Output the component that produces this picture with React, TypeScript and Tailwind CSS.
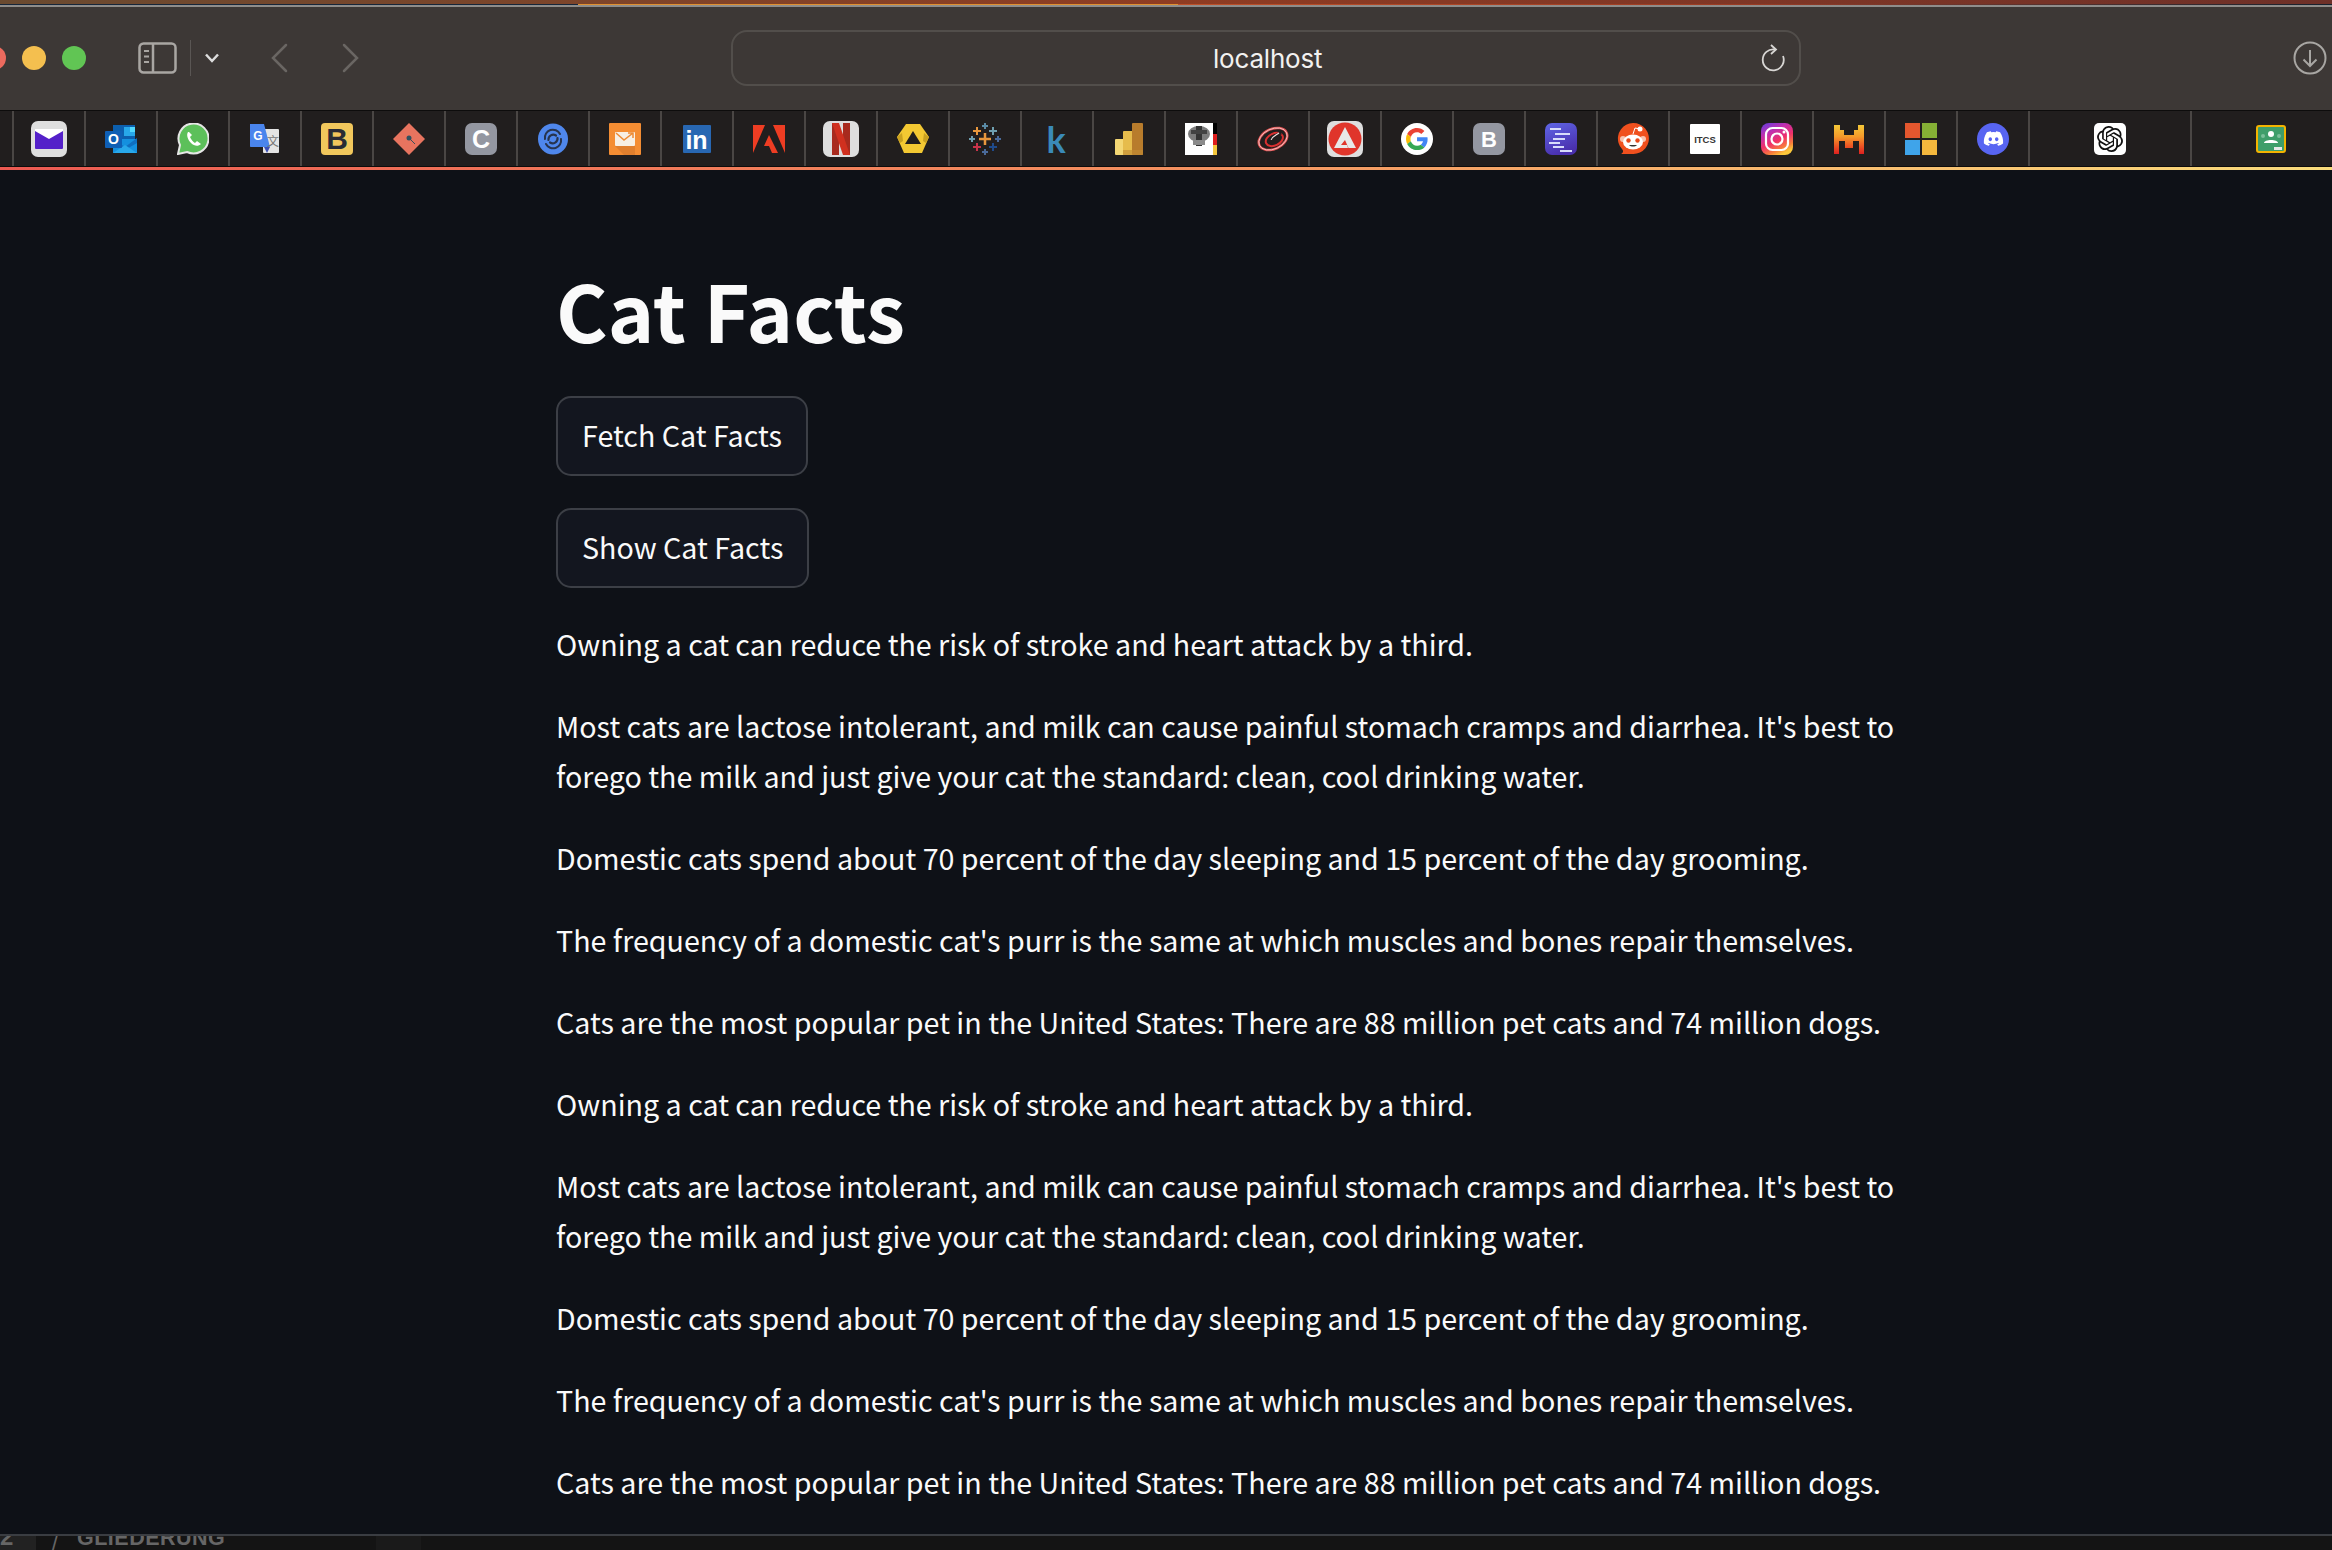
import React from "react";
import { FaDiscord } from "react-icons/fa6";
import { SiOpenai } from "react-icons/si";

const Svg = ({ s = 32, children }: { s?: number; children: React.ReactNode }) => (
  <svg width={s} height={s} viewBox={`0 0 ${s} ${s}`} className="block shrink-0">
    {children}
  </svg>
);

const font = "Liberation Sans, sans-serif";

const Letter = ({ x, y, size, fill, children, weight = 700 }: { x: number; y: number; size: number; fill: string; children: React.ReactNode; weight?: number }) => (
  <text x={x} y={y} fontSize={size} fontWeight={weight} fontFamily={font} fill={fill} textAnchor="middle">
    {children}
  </text>
);

const Plus = ({ x, y, r, c, w = 2 }: { x: number; y: number; r: number; c: string; w?: number }) => (
  <path d={`M${x - r} ${y}H${x + r}M${x} ${y - r}V${y + r}`} stroke={c} strokeWidth={w} />
);

const icons: React.ReactNode[] = [
  <Svg s={36} key="mail">
    <rect width="36" height="36" rx="7" fill="#dedede" />
    <rect x="4" y="8" width="28" height="20" rx="1" fill="#5420c9" />
    <path d="M4 8H32V10L18 18L4 10Z" fill="#fff" />
  </Svg>,
  <Svg key="outlook">
    <rect x="8" y="2" width="22" height="15" fill="#0c5fae" />
    <rect x="19" y="4" width="11" height="9" fill="#28a8ea" />
    <rect x="25" y="4" width="5" height="5" fill="#50d9ff" />
    <rect x="8" y="16" width="24" height="14" fill="#1490df" />
    <path d="M8 16L20 24L32 15V20L20 27L8 20Z" fill="#0f6fc0" />
    <path d="M8 30L20 22L32 30Z" fill="#28a8ea" />
    <rect x="0" y="8" width="17" height="17" rx="1" fill="#0f5fb5" />
    <Letter x={8.5} y={21} size={14} fill="#fff">O</Letter>
  </Svg>,
  <Svg key="whatsapp">
    <path d="M1 31L3 22A15 15 0 1 1 10 29Z" fill="#5cc05a" stroke="#e6e6e6" strokeWidth="2" />
    <path d="M11 9C9 12 11 17 14 20S21 24 24 21L20 18L18 20C16 19 14 16 13 14L15 12L12 9Z" fill="#fff" />
  </Svg>,
  <Svg key="translate">
    <rect x="14" y="6" width="16" height="24" rx="1" fill="#e4e4e4" />
    <path d="M15 24L18 30L21 24Z" fill="#3c50b8" />
    <path d="M1 1H15L21 24H2C1.400 24 1 23.600 1 23Z" fill="#4a85ed" />
    <Letter x={9} y={17} size={12} fill="#fff">G</Letter>
    <text x="18" y="23" fontSize="12" fontFamily="Noto Sans CJK SC, sans-serif" fill="#777">文</text>
  </Svg>,
  <Svg key="yellowb">
    <rect width="32" height="32" rx="4" fill="#f1c75c" />
    <Letter x={16} y={26} size={30} fill="#282b34" weight={700}>B</Letter>
    <rect x="13" y="18" width="6" height="3" fill="#f1c75c" />
  </Svg>,
  <Svg key="diamond">
    <path d="M16 0L32 16L16 32L0 16Z" fill="#e8745f" />
    <path d="M16 15L22 21" stroke="#38505c" strokeWidth="1" />
    <circle cx="16" cy="15" r="2.500" fill="#30505f" />
  </Svg>,
  <Svg key="c">
    <rect width="32" height="32" rx="7" fill="#9497a1" />
    <Letter x={16} y={25} size={25} fill="#fff">C</Letter>
  </Svg>,
  <Svg key="deepl">
    <ellipse cx="16" cy="16" rx="15" ry="15.500" fill="#4f87ec" />
    <g fill="none" stroke="#27344e" strokeLinecap="round">
      <path d="M8 16A8 8 0 0 1 23 11" strokeWidth="2" />
      <path d="M24 16A8 8 0 0 1 9 21" strokeWidth="2" />
      <path d="M11.500 17A4.800 4.800 0 0 1 19 12.500" strokeWidth="2.200" />
      <path d="M20.500 15A4.800 4.800 0 0 1 13 19.500" strokeWidth="2.200" />
    </g>
  </Svg>,
  <Svg key="orange">
    <rect width="32" height="32" rx="1" fill="#f48d33" />
    <path d="M6 23L26 9V32H15Z" fill="#e07f2e" />
    <rect x="6" y="9" width="20" height="14" rx="1" fill="#f7efe4" />
    <path d="M7 10L15 17L24 10M19 10H24V15" stroke="#ee8b34" strokeWidth="1.500" fill="none" />
  </Svg>,
  <Svg key="linkedin">
    <rect x="2" y="2" width="28" height="28" rx="1" fill="#2867b2" />
    <Letter x={15.500} y={26} size={25} fill="#fff">in</Letter>
  </Svg>,
  <Svg key="adobe">
    <path d="M0 2H12L0 30ZM20 2H32V30ZM16 12L25 30H19L16 23H11Z" fill="#ee3d23" />
  </Svg>,
  <Svg s={36} key="netflix">
    <rect width="36" height="36" rx="7" fill="#dedede" />
    <rect x="9" y="2" width="7" height="32" fill="#a82a1e" />
    <rect x="20" y="2" width="7" height="32" fill="#a82a1e" />
    <path d="M9 2H16L27 34H20Z" fill="#d0301f" />
  </Svg>,
  <Svg key="commerz">
    <path d="M9 1H23L32 14L25 30H7L0 14Z" fill="#f3c832" />
    <path d="M16 8L24 21H8Z" fill="#211e1e" />
    <path d="M0 14L5 10L6 18L3 20ZM32 14L27 10L26 18L29 20Z" fill="#c9a020" />
  </Svg>,
  <Svg key="tableau">
    <Plus x={16} y={16} r={6} c="#e8973d" w={2.500} />
    <Plus x={8} y={8} r={4} c="#e8973d" />
    <Plus x={16} y={3} r={3} c="#5a8aa5" />
    <Plus x={24} y={8} r={4} c="#6f9fb0" />
    <Plus x={3} y={16} r={3} c="#6f9fb0" />
    <Plus x={29} y={16} r={3} c="#4a6a9a" />
    <Plus x={8} y={24} r={4} c="#c8334a" />
    <Plus x={24} y={24} r={4} c="#1f4a8a" />
    <Plus x={16} y={29} r={3} c="#4a6a9a" />
  </Svg>,
  <Svg key="k">
    <text x="15" y="30" fontSize="36" fontWeight="700" fontFamily="Lato, sans-serif" fill="#3a8ab8" textAnchor="middle">k</text>
  </Svg>,
  <Svg key="powerbi">
    <rect x="2" y="16" width="12" height="16" rx="1" fill="#f4d774" />
    <rect x="10" y="8" width="11" height="24" rx="1" fill="#e6bc4c" />
    <rect x="19" y="0" width="11" height="32" rx="1" fill="#b87c2c" />
    <rect x="10" y="27" width="20" height="5" fill="#c08a34" opacity="0.6" />
  </Svg>,
  <Svg key="bund">
    <rect width="32" height="32" fill="#fff" />
    <rect x="28" width="4" height="11" fill="#000" />
    <rect x="28" y="11" width="4" height="11" fill="#dd1d1d" />
    <rect x="28" y="22" width="4" height="10" fill="#f5c63c" />
    <g opacity="0.85" style={{ filter: "blur(0.7px)" }}>
      <ellipse cx="14" cy="11" rx="11" ry="8" fill="#666" />
      <rect x="11" y="3" width="6" height="20" fill="#111" />
      <rect x="6" y="7" width="16" height="4" fill="#222" />
      <rect x="8" y="17" width="12" height="5" fill="#777" />
    </g>
  </Svg>,
  <Svg key="at">
    <g transform="rotate(-25 16 16)" fill="none">
      <ellipse cx="16" cy="16" rx="15" ry="10" stroke="#e05050" strokeWidth="2.500" />
      <ellipse cx="16" cy="16" rx="15" ry="10" stroke="#f0d0d0" strokeWidth="0.800" />
      <ellipse cx="17" cy="17" rx="9" ry="6" stroke="#d83030" strokeWidth="2" />
      <path d="M17 14H26" stroke="#211e1e" strokeWidth="3" />
      <path d="M14 16C17 13 21 14 24 13" stroke="#f0e0e0" strokeWidth="1.200" />
    </g>
  </Svg>,
  <Svg s={36} key="arbeit">
    <rect width="36" height="36" rx="7" fill="#dedede" />
    <circle cx="18" cy="18" r="16.500" fill="#e0352b" />
    <path d="M18 6L29 27L21.500 27L18 19L14 24H20L21 27H7Z" fill="#e8e8e8" />
  </Svg>,
  <Svg key="google">
    <circle cx="16" cy="16" r="16" fill="#fff" />
    <g transform="translate(5 5) scale(0.46)">
      <path fill="#EA4335" d="M24 9.500c3.540 0 6.710 1.220 9.210 3.600l6.850-6.850C35.900 2.380 30.470 0 24 0 14.620 0 6.510 5.380 2.560 13.220l7.980 6.190C12.430 13.720 17.740 9.500 24 9.500z" />
      <path fill="#4285F4" d="M46.980 24.550c0-1.570-.15-3.090-.38-4.550H24v9.020h12.940c-.58 2.960-2.260 5.480-4.780 7.180l7.730 6c4.510-4.180 7.090-10.360 7.090-17.650z" />
      <path fill="#FBBC05" d="M10.530 28.590c-.5-1.450-.78-2.990-.78-4.590s.27-3.140.78-4.590l-7.980-6.190C.92 16.460 0 20.120 0 24c0 3.880.92 7.540 2.560 10.780l7.970-6.190z" />
      <path fill="#34A853" d="M24 48c6.480 0 11.930-2.130 15.890-5.810l-7.730-6c-2.150 1.450-4.920 2.300-8.160 2.300-6.260 0-11.570-4.220-13.470-9.910l-7.980 6.190C6.510 42.620 14.620 48 24 48z" />
    </g>
  </Svg>,
  <Svg key="grayb">
    <rect width="32" height="32" rx="7" fill="#9497a1" />
    <Letter x={16} y={24} size={22} fill="#fff">B</Letter>
  </Svg>,
  <Svg key="lines">
    <defs>
      <linearGradient id="pl" x1="0" y1="0" x2="0.400" y2="1">
        <stop offset="0" stopColor="#5f66e6" />
        <stop offset="1" stopColor="#4a30ae" />
      </linearGradient>
    </defs>
    <rect width="32" height="32" rx="7" fill="url(#pl)" />
    <path d="M5 6H16M10 11H25M8 16H20M4 20H15M8 24H19M15 28H27" stroke="#d8dcfb" strokeWidth="2.200" />
  </Svg>,
  <Svg key="reddit">
    <path d="M4 31C6 30 7 28 5 26A15.500 15.500 0 1 1 16 31Z" fill="#f0501e" />
    <circle cx="6" cy="16" r="3" fill="#f7c3b0" />
    <circle cx="26" cy="16" r="3" fill="#f7c3b0" />
    <ellipse cx="16" cy="19" rx="10" ry="7.500" fill="#fff" />
    <circle cx="11.500" cy="17.500" r="2.200" fill="#e8481a" />
    <circle cx="20.500" cy="17.500" r="2.200" fill="#e8481a" />
    <path d="M12 22C14 24 18 24 20 22Z" fill="#333" />
    <path d="M16 11L18 5L23 6" stroke="#fff" strokeWidth="1" fill="none" />
    <circle cx="23" cy="6" r="2.500" fill="#fff" />
  </Svg>,
  <Svg key="itcs">
    <rect x="1" y="1" width="30" height="30" rx="1" fill="#fff" />
    <Letter x={16} y={20} size={9.500} fill="#333">ITCS</Letter>
  </Svg>,
  <Svg key="instagram">
    <defs>
      <linearGradient id="ig" x1="0.100" y1="0" x2="0.600" y2="1">
        <stop offset="0" stopColor="#6a3cdc" />
        <stop offset="0.300" stopColor="#c02fb0" />
        <stop offset="0.600" stopColor="#f0306a" />
        <stop offset="0.850" stopColor="#f8803a" />
        <stop offset="1" stopColor="#fcc83a" />
      </linearGradient>
    </defs>
    <rect width="32" height="32" rx="8" fill="url(#ig)" />
    <rect x="5" y="5" width="22" height="22" rx="6.500" fill="none" stroke="#fff" strokeWidth="2.200" />
    <circle cx="16" cy="16" r="5.500" fill="none" stroke="#fff" strokeWidth="2.200" />
    <circle cx="23" cy="9" r="1.500" fill="#fff" />
  </Svg>,
  <Svg key="mistral">
    <defs>
      <linearGradient id="mi" x1="0" y1="0" x2="0" y2="1">
        <stop offset="0" stopColor="#f4c838" />
        <stop offset="0.400" stopColor="#f59a2a" />
        <stop offset="0.700" stopColor="#ee5a24" />
        <stop offset="1" stopColor="#dd2020" />
      </linearGradient>
    </defs>
    <path d="M1 2H7V7H11V12H21V7H25V2H31V31H26V18H20V25H12V18H6V31H1Z" fill="url(#mi)" />
  </Svg>,
  <Svg key="ms">
    <rect width="15" height="15" fill="#e4572e" />
    <rect x="17" width="15" height="15" fill="#85b035" />
    <rect y="17" width="15" height="15" fill="#3fa4ea" />
    <rect x="17" y="17" width="15" height="15" fill="#f5b83d" />
  </Svg>,
  <div key="discord" className="flex h-8 w-8 items-center justify-center rounded-full bg-[#5865f2]">
    <FaDiscord className="h-[21px] w-[21px] text-white" />
  </div>,
];

const Cell = ({ w = "w-[72px]", children }: { w?: string; children: React.ReactNode }) => (
  <div className={`flex h-full shrink-0 items-center justify-center border-r-2 border-[#4a4644] ${w}`}>{children}</div>
);

const paragraphs = [
  "Owning a cat can reduce the risk of stroke and heart attack by a third.",
  "Most cats are lactose intolerant, and milk can cause painful stomach cramps and diarrhea. It's best to forego the milk and just give your cat the standard: clean, cool drinking water.",
  "Domestic cats spend about 70 percent of the day sleeping and 15 percent of the day grooming.",
  "The frequency of a domestic cat's purr is the same at which muscles and bones repair themselves.",
  "Cats are the most popular pet in the United States: There are 88 million pet cats and 74 million dogs.",
];

const ST = "font-['Noto_Sans_CJK_SC',sans-serif]";

export default function App() {
  return (
    <div className="flex h-[1550px] w-[2332px] flex-col overflow-hidden bg-[#0e1117]">
      {/* window top edge */}
      <div className="h-[4px] bg-gradient-to-r from-[#6a4a30] via-[#8f3c22] to-[#6e3028]" />
      <div className="flex h-[1px]">
        <div className="w-[578px] bg-[#16263a]" />
        <div className="w-[600px] bg-[#e09030]" />
        <div className="flex-1 bg-gradient-to-r from-[#c05028] via-[#9a3a22] to-[#14202e]" />
      </div>
      <div className="h-[2px] bg-[#8f8d8b]" />

      {/* toolbar */}
      <div className="flex h-[103px] items-center bg-[#3d3836] pb-[2px]">
        <div className="-ml-[18px] flex w-[116px] shrink-0 gap-4 pt-[1px]">
          <div className="h-6 w-6 rounded-full bg-[#ec6a5e]" />
          <div className="h-6 w-6 rounded-full bg-[#f4bf4f]" />
          <div className="h-6 w-6 rounded-full bg-[#61c554]" />
        </div>
        <svg width="39" height="32" viewBox="0 0 39 32" className="ml-[40px] shrink-0" fill="none" stroke="#a9a6a3" strokeWidth="2.500">
          <rect x="1.500" y="1.500" width="36" height="29" rx="4" />
          <path d="M15 1.500V30.500" />
          <path d="M6 9H11M6 14.500H11M6 20H11" strokeWidth="2" />
        </svg>
        <div className="ml-[13px] h-9 w-[1px] shrink-0 bg-[#5a5654]" />
        <svg width="16" height="10" viewBox="0 0 16 10" className="ml-[13px] shrink-0" fill="none" stroke="#ddd" strokeWidth="2.500">
          <path d="M2 1.500L8 8L14 1.500" />
        </svg>
        <svg width="18" height="30" viewBox="0 0 18 30" className="ml-[50px] shrink-0" fill="none" stroke="#6a6663" strokeWidth="2.500" strokeLinecap="round">
          <path d="M16 2L3 15L16 28" />
        </svg>
        <svg width="18" height="30" viewBox="0 0 18 30" className="ml-[54px] shrink-0" fill="none" stroke="#6a6663" strokeWidth="2.500" strokeLinecap="round">
          <path d="M2 2L15 15L2 28" />
        </svg>
        <div className="ml-[371px] flex h-[56px] w-[1070px] shrink-0 items-center rounded-[16px] border-2 border-[#524e4b] pl-[480px] pr-[13px] pt-[2px]">
          <span className="flex-1 font-['Inter',sans-serif] text-[26px] leading-none tracking-[-0.2px] text-[#f2f1f0]">localhost</span>
          <svg width="26" height="30" viewBox="0 0 26 30" fill="none" stroke="#d8d6d4" strokeWidth="1.800">
            <path d="M15 5.500A10.500 10.500 0 1 0 23 12" />
            <path d="M11 1L16 5.500L11 10" />
          </svg>
        </div>
        <svg width="34" height="34" viewBox="0 0 34 34" className="ml-auto mr-[5px] shrink-0" fill="none" stroke="#a8a6a3" strokeWidth="2">
          <circle cx="17" cy="17" r="15.500" />
          <path d="M17 9V25M10.500 18.500L17 25L23.500 18.500" />
        </svg>
      </div>

      {/* bookmarks */}
      <div className="flex h-[57px] items-stretch overflow-hidden border-y border-[#0d0c0c] bg-[#211e1e]">
        <div className="ml-[12px] w-[2px] shrink-0 bg-[#4a4644]" />
        {icons.map((ic, i) => (
          <Cell key={i}>{ic}</Cell>
        ))}
        <Cell w="w-[162px]">
          <div className="flex h-8 w-8 items-center justify-center rounded-[5px] bg-white">
            <SiOpenai className="h-[26px] w-[26px] text-[#111]" />
          </div>
        </Cell>
        <div className="flex w-[158px] shrink-0 items-center justify-center">
          <Svg s={30}>
            <rect x="1" y="2" width="28" height="26" rx="2" fill="#3f9e6a" stroke="#f4b400" strokeWidth="2" />
            <circle cx="15" cy="10" r="3" fill="#fff" />
            <path d="M8 19C8 15 22 15 22 19Z" fill="#fff" />
            <circle cx="7" cy="12" r="2" fill="#7cc09a" />
            <circle cx="23" cy="12" r="2" fill="#7cc09a" />
            <rect x="18" y="23" width="8" height="3" fill="#e8e8e8" />
          </Svg>
        </div>
      </div>
      <div className="h-[3px] bg-gradient-to-r from-[#ec5a52] via-[#f4905f] to-[#f9dc7c]" />

      {/* streamlit page */}
      <main className={`h-[1364px] overflow-hidden bg-[#0e1117] pl-[556px] ${ST}`}>
        <div className="w-[1373px]">
          <h1 className="mt-[78px] text-[78.800px] font-bold leading-[122px] text-[#fafafa]">Cat Facts</h1>
          <button className="mt-[26px] block h-[80px] rounded-[15px] border-2 border-[#3c3f46] bg-[#13161f] px-[24px] pb-[2px] text-[28.650px] text-[#fafafa]">Fetch Cat Facts</button>
          <button className="mt-[32px] block h-[80px] rounded-[15px] border-2 border-[#3c3f46] bg-[#13161f] px-[24px] pb-[2px] text-[28.650px] text-[#fafafa]">Show Cat Facts</button>
          <div className="mt-[31px] flex flex-col gap-[32px]">
            {[...paragraphs, ...paragraphs].map((p, i) => (
              <p key={i} className="text-[28.650px] leading-[50px] text-[#fafafa]">{p}</p>
            ))}
          </div>
        </div>
      </main>

      {/* editor peeking out beneath the window */}
      <div className="h-[2px] bg-[#3a3d42]" />
      <div className="flex h-[14px] overflow-hidden bg-[#141414] font-['Liberation_Sans',sans-serif] text-[#666]">
        <div className="-mt-[6px] w-[36px] shrink-0 bg-[#222] text-[24px] font-bold leading-[14px]">2</div>
        <div className="ml-[16px] w-[25px] shrink-0 text-[22px] leading-[14px]">/</div>
        <div className="-mt-[10px] w-[299px] shrink-0 text-[21.500px] font-bold leading-[24px] tracking-[0.5px]">GLIEDERUNG</div>
        <div className="w-[45px] shrink-0 bg-[#1a1a1a]" />
      </div>
    </div>
  );
}
